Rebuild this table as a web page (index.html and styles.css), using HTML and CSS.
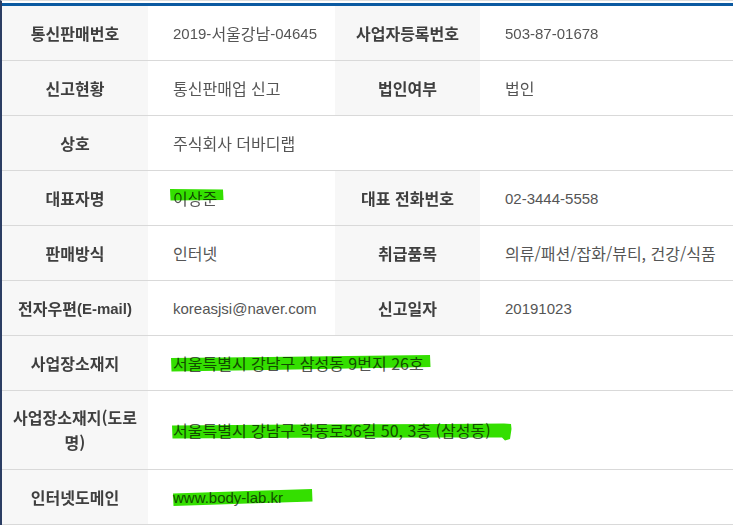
FILE: index.html
```html
<!DOCTYPE html>
<html lang="ko">
<head>
<meta charset="utf-8">
<title>사업자 정보</title>
<link rel="stylesheet" href="styles.css">
</head>
<body>
<div class="frame">
  <div class="info">
    <div class="th">통신판매번호</div>
    <div class="td">2019-<span class="ko">서울강남</span>-04645</div>
    <div class="th">사업자등록번호</div>
    <div class="td">503-87-01678</div>

    <div class="th">신고현황</div>
    <div class="td"><span class="ko">통신판매업 신고</span></div>
    <div class="th">법인여부</div>
    <div class="td"><span class="ko">법인</span></div>

    <div class="th">상호</div>
    <div class="td wide"><span class="ko">주식회사 더바디랩</span></div>

    <div class="th">대표자명</div>
    <div class="td">
      <svg class="mark" viewBox="0 0 187 54" preserveAspectRatio="none"><path d="M22 18 L75 18.5 L75.5 29 L22.5 29.5 Z"/></svg>
      <span class="ko">이상준</span>
    </div>
    <div class="th">대표 전화번호</div>
    <div class="td">02-3444-5558</div>

    <div class="th">판매방식</div>
    <div class="td"><span class="ko">인터넷</span></div>
    <div class="th">취급품목</div>
    <div class="td"><span class="ko">의류/패션/잡화/뷰티, 건강/식품</span></div>

    <div class="th">전자우편<span class="en">(E-mail)</span></div>
    <div class="td">koreasjsi@naver.com</div>
    <div class="th">신고일자</div>
    <div class="td">20191023</div>

    <div class="th">사업장소재지</div>
    <div class="td wide">
      <svg class="mark" viewBox="0 0 585 54" preserveAspectRatio="none"><path d="M23 22 L120 21 L200 20 L282 19 L282.5 31 L200 32.5 L120 34 L23.5 35.5 Z"/></svg>
      <span class="ko">서울특별시 강남구 삼성동 9번지 26호</span>
    </div>

    <div class="th">사업장소재지(도로명)</div>
    <div class="td wide">
      <svg class="mark" viewBox="0 0 585 78" preserveAspectRatio="none"><path d="M24 34.5 L150 33.5 L300 33 L356 32.5 L363 33 L363.5 38 L362 48 L357 49.5 L354 46.5 L300 46.5 L150 46.8 L24.5 47.5 Z"/></svg>
      <span class="ko">서울특별시 강남구 학동로56길 50, 3층 (삼성동)</span>
    </div>

    <div class="th">인터넷도메인</div>
    <div class="td wide">
      <svg class="mark" viewBox="0 0 585 54" preserveAspectRatio="none"><path d="M25 23.5 L100 21 L164 19 L164.5 31.5 L100 33.5 L25.5 36 Z"/></svg>
      www.body-lab.kr
    </div>
  </div>
</div>
</body>
</html>
```

FILE: styles.css
```css
html, body {
  margin: 0;
  padding: 0;
  background: #ffffff;
}

.frame {
  border-top: 1px solid #dedede;
  border-left: 2px solid #2b3d63;
  padding-top: 2px;
  width: 731px;
  min-height: 523px;
  box-sizing: content-box;
}

.info {
  border-top: 3px solid #0b5aa1;
  display: grid;
  grid-template-columns: 146px 187px 145px 1fr;
  font-family: "Liberation Sans", "Noto Sans CJK KR", sans-serif;
  font-size: 15px;
  line-height: 25px;
}

.th,
.td {
  min-height: 55px;
  box-sizing: border-box;
  padding: 14px 0;
  border-bottom: 1px solid #d9d9d9;
  display: flex;
  align-items: center;
}

.th {
  background: #f7f7f7;
  color: #3f3f3f;
  font-family: "Noto Sans CJK KR", sans-serif;
  font-size: 16px;
  font-weight: 700;
  justify-content: center;
  text-align: center;
  padding-left: 10px;
  padding-right: 10px;
}

.th .en {
  font-family: "Liberation Sans", sans-serif;
  font-size: 15px;
}

.td {
  background: #ffffff;
  color: #555555;
  padding-left: 25px;
  position: relative;
}

.ko {
  font-family: "Noto Sans CJK KR", sans-serif;
  font-size: 16px;
}

.wide {
  grid-column: span 3;
}

.mark {
  position: absolute;
  left: 0;
  top: 0;
  width: 100%;
  height: 100%;
  mix-blend-mode: multiply;
  pointer-events: none;
}

.mark path {
  fill: #34df00;
}
```
